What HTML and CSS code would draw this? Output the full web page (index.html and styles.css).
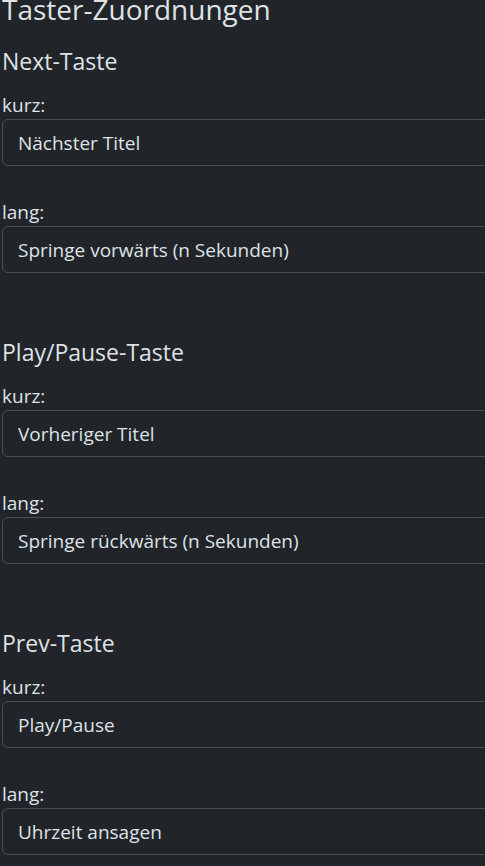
FILE: index.html
```html
<!DOCTYPE html>
<html lang="de">
  <head>
    <meta charset="UTF-8" />
    <meta name="viewport" content="width=device-width, initial-scale=1.0" />
    <title>Taster-Zuordnungen</title>

    <link rel="stylesheet" href="styles.css">
  </head>

  <body>
    <div class="container">
      <h3 class="page-title">Taster-Zuordnungen</h3>

      <div class="section">
        <h4>Next-Taste</h4>
        <div class="field">
          <label for="next-short">kurz:</label>
          <select id="next-short" class="form-select">
            <option>Nächster Titel</option>
          </select>
        </div>
        <div class="field">
          <label for="next-long">lang:</label>
          <select id="next-long" class="form-select">
            <option>Springe vorwärts (n Sekunden)</option>
          </select>
        </div>
      </div>

      <div class="section">
        <h4>Play/Pause-Taste</h4>
        <div class="field">
          <label for="play-short">kurz:</label>
          <select id="play-short" class="form-select">
            <option>Vorheriger Titel</option>
          </select>
        </div>
        <div class="field">
          <label for="play-long">lang:</label>
          <select id="play-long" class="form-select">
            <option>Springe rückwärts (n Sekunden)</option>
          </select>
        </div>
      </div>

      <div class="section">
        <h4>Prev-Taste</h4>
        <div class="field">
          <label for="prev-short">kurz:</label>
          <select id="prev-short" class="form-select">
            <option>Play/Pause</option>
          </select>
        </div>
        <div class="field">
          <label for="prev-long">lang:</label>
          <select id="prev-long" class="form-select">
            <option>Uhrzeit ansagen</option>
          </select>
        </div>
      </div>
    </div>
  </body>
</html>
```

FILE: styles.css
```css
html,
body {
  overflow: hidden;
}

body {
  margin: 0;
  font-family: "Open Sans", "Noto Sans", sans-serif;
  font-size: 19px;
  background-color: #212529;
  color: #dee2e6;
}

.container {
  width: 620px;
  padding-left: 2px;
}

.page-title {
  font-size: 28px;
  font-weight: 400;
  line-height: 34px;
  margin: -8px 0 21px;
}

h4 {
  font-size: 23px;
  font-weight: 400;
  line-height: 28px;
  margin: 0 0 17px;
}

.section {
  padding-bottom: 32px;
}

.field {
  margin-bottom: 33px;
}

label {
  display: block;
  line-height: 27px;
}

.form-select {
  display: block;
  width: 100%;
  height: 47px;
  box-sizing: border-box;
  padding: 0 15px;
  font-family: inherit;
  font-size: 19px;
  color: #dee2e6;
  background-color: #212529;
  border: 1px solid #495057;
  border-radius: 6px;
  appearance: none;
  -webkit-appearance: none;
}
```
